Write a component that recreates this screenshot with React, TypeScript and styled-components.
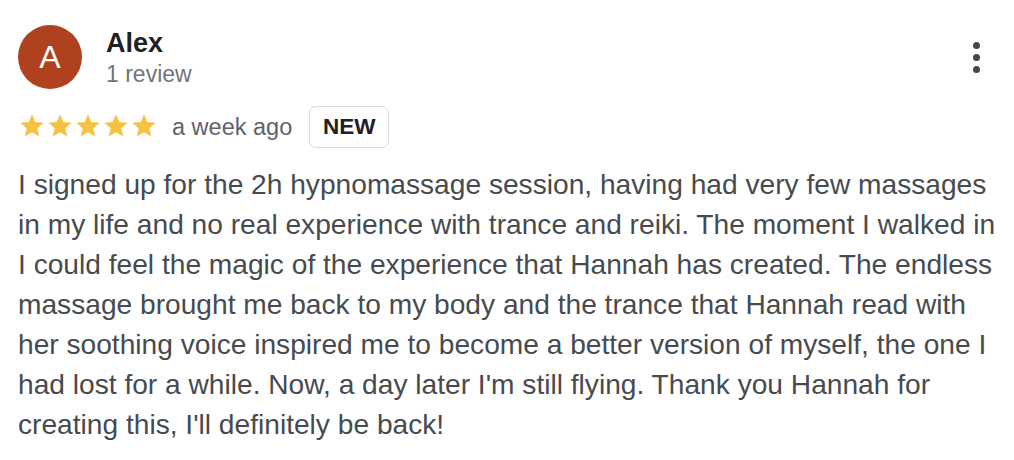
import React from 'react';
import styled, { createGlobalStyle } from 'styled-components';

const GlobalStyle = createGlobalStyle`
  html, body {
    margin: 0;
    padding: 0;
    background: #fff;
  }
  body {
    font-family: 'Liberation Sans', Arial, Helvetica, sans-serif;
  }
`;

const Card = styled.div`
  width: 1014px;
  height: 460px;
  box-sizing: border-box;
  padding: 25px 0 0 18px;
  overflow: hidden;
`;

const Header = styled.div`
  width: 962px;
  display: flex;
  align-items: center;
  justify-content: space-between;
`;

const Author = styled.div`
  display: flex;
  align-items: flex-start;
  gap: 24px;
`;

const Avatar = styled.div<{ $bg: string }>`
  width: 64px;
  height: 64px;
  border-radius: 50%;
  background: ${(p) => p.$bg};
  color: #fff;
  font-size: 32px;
  display: flex;
  align-items: center;
  justify-content: center;
  line-height: 1;
`;

const Names = styled.div`
  display: flex;
  flex-direction: column;
  padding-top: 2px;
`;

const Name = styled.div`
  font-size: 27px;
  font-weight: 700;
  line-height: 32px;
  color: #202124;
`;

const Meta = styled.div`
  font-size: 23px;
  line-height: 30px;
  color: #70757a;
`;

const Kebab = styled.button`
  border: 0;
  background: none;
  padding: 0;
  display: flex;
  flex-direction: column;
  gap: 5px;
  cursor: pointer;
`;

const Dot = styled.span`
  width: 7px;
  height: 7px;
  border-radius: 50%;
  background: #444746;
`;

const RatingRow = styled.div`
  display: flex;
  align-items: center;
  margin-top: 17px;
  height: 42px;
`;

const Stars = styled.div`
  display: flex;
  margin-top: -3px;
`;

const When = styled.span`
  font-size: 23.5px;
  color: #5f6368;
  margin-left: 14px;
`;

const Badge = styled.span`
  margin-left: 17px;
  height: 42px;
  width: 80px;
  box-sizing: border-box;
  border: 1.5px solid #dadce0;
  border-radius: 7px;
  display: flex;
  align-items: center;
  justify-content: center;
  font-size: 22.5px;
  font-weight: 700;
  color: #202124;
`;

const Body = styled.p`
  margin: 17px 0 0;
  width: 984px;
  font-size: 28.15px;
  line-height: 40px;
  color: #474b4f;
`;

const Star = () => (
  <svg width="28" height="28" viewBox="0 0 24 24">
    <path
      fill="#f4c142"
      d="M12 17.27L18.18 21l-1.64-7.03L22 9.24l-7.19-.61L12 2 9.19 8.63 2 9.24l5.46 4.73L5.82 21z"
    />
  </svg>
);

const review =
  "I signed up for the 2h hypnomassage session, having had very few massages in my life and no real experience with trance and reiki. The moment I walked in I could feel the magic of the experience that Hannah has created. The endless massage brought me back to my body and the trance that Hannah read with her soothing voice inspired me to become a better version of myself, the one I had lost for a while. Now, a day later I'm still flying. Thank you Hannah for creating this, I'll definitely be back!";

const App = () => {
  const rating = 5;

  return (
    <>
      <GlobalStyle />
      <Card>
        <Header>
          <Author>
            <Avatar $bg="#b0411f">A</Avatar>
            <Names>
              <Name>Alex</Name>
              <Meta>1 review</Meta>
            </Names>
          </Author>
          <Kebab aria-label="More options">
            <Dot />
            <Dot />
            <Dot />
          </Kebab>
        </Header>
        <RatingRow>
          <Stars>
            {Array.from({ length: rating }).map((_, i) => (
              <Star key={i} />
            ))}
          </Stars>
          <When>a week ago</When>
          <Badge>NEW</Badge>
        </RatingRow>
        <Body>{review}</Body>
      </Card>
    </>
  );
};

export default App;
